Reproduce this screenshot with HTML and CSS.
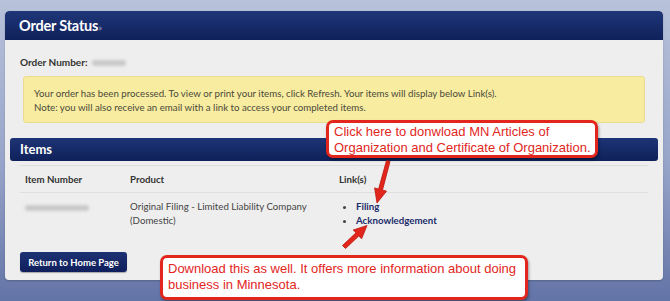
FILE: index.html
```html
<!DOCTYPE html>
<html lang="en">
<head>
  <meta charset="UTF-8" />
  <title>Order Status</title>
  <link rel="stylesheet" href="styles.css">
</head>
<body>

  <div class="panel">
    <div class="panel-head">Order Status<span class="raquo">&raquo;</span></div>

    <div class="panel-body">
      <p class="order-num">Order Number: <span class="blur blur-short"></span></p>

      <div class="notice">
        Your order has been processed. To view or print your items, click Refresh. Your items will display below Link(s).<br>
        Note: you will also receive an email with a link to access your completed items.
      </div>

      <div class="sub-head">Items</div>

      <table class="items">
        <thead>
          <tr>
            <th class="col-num">Item Number</th>
            <th class="col-prod">Product</th>
            <th>Link(s)</th>
          </tr>
        </thead>
        <tbody>
          <tr>
            <td><span class="blur blur-long"></span></td>
            <td>Original Filing - Limited Liability Company<br>(Domestic)</td>
            <td>
              <ul class="links">
                <li><a href="#">Filing</a></li>
                <li><a href="#">Acknowledgement</a></li>
              </ul>
            </td>
          </tr>
        </tbody>
      </table>

      <button class="home-btn">Return to Home Page</button>
    </div>
  </div>

  <!-- annotations drawn over the screenshot -->
  <div class="callout callout-top">Click here to donwload MN Articles of<br>Organization and Certificate of Organization.</div>
  <div class="callout callout-bottom">Download this as well. It offers more information about doing<br>business in Minnesota.</div>

  <svg class="arrows" width="670" height="301" viewBox="0 0 670 301">
    <g fill="#e3261c" stroke="#b8160e" stroke-width="0.8" stroke-linejoin="round">
      <path d="M386.5 160.5 L390 161.5 L382.5 190 L386.5 191.2 L377 203 L374.6 187.9 L378.6 189 Z" />
      <path d="M342.5 245.5 L345.5 248.5 L358.8 236 L361.6 238.8 L367 225.5 L353.2 230 L356 232.8 Z" />
    </g>
  </svg>

</body>
</html>
```

FILE: styles.css
```css
* {
  margin: 0;
  padding: 0;
  box-sizing: border-box;
}

body {
  position: relative;
  width: 670px;
  height: 301px;
  overflow: hidden;
  padding: 11px 7px 0 5px;
  font-family: Lato, 'Open Sans', sans-serif;
  font-size: 10px;
  color: #333333;
  background: linear-gradient(to bottom, #b8c2da 0%, #97a4c9 55%, #6273a6 100%);
}

.panel {
  background: #eeeeee;
  border-radius: 4px;
  height: 269px;
  overflow: hidden;
  box-shadow: 0 1px 2px rgba(0, 0, 0, 0.2);
}

.panel-head {
  height: 29px;
  padding: 6px 14px;
  background: linear-gradient(to bottom, #1f3679, #0f215a);
  color: #ffffff;
  font-size: 14.5px;
  font-weight: 700;
  letter-spacing: -0.2px;
  border-radius: 4px 4px 0 0;
}

.raquo {
  font-size: 9px;
  color: #9aa4c4;
  font-weight: 400;
}

.panel-body {
  padding: 15px 5px 0 5px;
}

.order-num {
  font-weight: 700;
  font-size: 10px;
  line-height: 14px;
  margin-left: 10px;
}

.blur {
  display: inline-block;
  height: 6px;
  border-radius: 3px;
  background: #c9c9c9;
  filter: blur(1.5px);
  vertical-align: middle;
}

.blur-short {
  width: 34px;
  margin-left: 2px;
}

.blur-long {
  width: 64px;
}

.notice {
  margin: 7px 13px 0 13px;
  height: 47px;
  padding: 9px 10px 0 10px;
  background: #f8eca0;
  border: 1px solid #eadc8e;
  border-radius: 3px;
  font-size: 9.7px;
  line-height: 14px;
  color: #4a4a3a;
}

.sub-head {
  margin-top: 15px;
  height: 23px;
  padding: 3px 10px;
  background: linear-gradient(to bottom, #1d3476, #0f215a);
  color: #ffffff;
  font-size: 13px;
  font-weight: 700;
  border-radius: 3px;
}

.items {
  margin: 4px 10px 0 10px;
  width: 628px;
  border-collapse: collapse;
  font-size: 9.7px;
}

.items th {
  text-align: left;
  font-weight: 700;
  color: #333333;
  padding: 0 5px;
  height: 27px;
  border-top: 1px solid #dedede;
  border-bottom: 1px solid #dedede;
}

.items td {
  vertical-align: top;
  padding: 6px 5px;
  line-height: 14px;
  color: #444444;
}

.col-num {
  width: 105px;
}

.col-prod {
  width: 209px;
}

.links {
  list-style: disc;
  padding-left: 17px;
}

.links a {
  color: #1b2c6b;
  font-weight: 700;
  text-decoration: none;
}

.home-btn {
  margin: 19px 0 0 10px;
  width: 107px;
  height: 20px;
  background: linear-gradient(to bottom, #1d3173, #101f5c);
  color: #ffffff;
  font-family: Lato, sans-serif;
  font-size: 9.5px;
  font-weight: 700;
  border: none;
  border-radius: 3px;
  box-shadow: 0 1px 1px rgba(0, 0, 0, 0.3);
}

.callout {
  position: absolute;
  background: #ffffff;
  border: 3px solid #e2261d;
  border-radius: 7px;
  color: #e2261d;
  font-family: 'Liberation Sans', Arial, sans-serif;
  font-size: 13px;
  line-height: 16px;
  padding: 1px 5px;
  box-shadow: 1px 2px 3px rgba(0, 0, 0, 0.35);
  white-space: nowrap;
}

.callout-top {
  left: 326px;
  top: 120px;
  width: 272px;
  height: 38px;
}

.callout-bottom {
  left: 160px;
  top: 255px;
  width: 368px;
  height: 45px;
  padding-top: 3px;
}

.arrows {
  position: absolute;
  left: 0;
  top: 0;
}
```
